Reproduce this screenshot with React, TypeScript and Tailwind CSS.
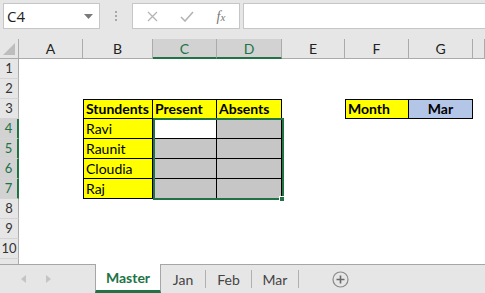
import React from 'react';

const cols = ['A', 'B', 'C', 'D', 'E', 'F', 'G', ''];
const selCols = ['C', 'D'];
const rows = [1, 2, 3, 4, 5, 6, 7, 8, 9, 10];
const selRows = [4, 5, 6, 7];

const students = ['Ravi', 'Raunit', 'Cloudia', 'Raj'];

const font = { fontFamily: 'Lato, "Open Sans", sans-serif' };

const Cell = ({ className = '', children }: { className?: string; children?: React.ReactNode }) => (
    <div className={`h-[20px] flex items-center px-[2px] text-[14px] text-black leading-none ${className}`}>{children}</div>
);

const SheetRow = ({ n }: { n: number }) => {
    const sel = selRows.includes(n);
    const header = (
        <div
            className={`h-[20px] flex items-center justify-center text-[13px] border-b border-[#d4d4d4] ${
                sel ? 'bg-[#d2d2d2] text-[#217346] border-r-2 border-r-[#217346]' : 'bg-[#e6e6e6] text-[#333] border-r border-r-[#ababab]'
            }`}
        >
            {n}
        </div>
    );

    let cells: React.ReactNode[] = [];
    if (n === 3) {
        cells = [
            <Cell key="a" />,
            <Cell key="b" className="bg-[#ffff00] font-bold border border-black">Stundents</Cell>,
            <Cell key="c" className="bg-[#ffff00] font-bold border-y border-r border-black">Present</Cell>,
            <Cell key="d" className="bg-[#ffff00] font-bold border-y border-r border-black">Absents</Cell>,
            <Cell key="e" />,
            <Cell key="f" className="bg-[#ffff00] font-bold border border-black">Month</Cell>,
            <Cell key="g" className="bg-[#b4c6e7] font-bold border-y border-r border-black justify-center">Mar</Cell>,
            <Cell key="h" />,
        ];
    } else if (n >= 4 && n <= 7) {
        const name = students[n - 4];
        cells = [
            <Cell key="a" />,
            <Cell key="b" className="bg-[#ffff00] border-x border-b border-black">{name}</Cell>,
            <Cell key="c" className={`${n === 4 ? 'bg-white' : 'bg-[#c6c6c6]'} border-r border-b border-black`} />,
            <Cell key="d" className="bg-[#c6c6c6] border-r border-b border-black" />,
            <Cell key="e" />,
            <Cell key="f" />,
            <Cell key="g" />,
            <Cell key="h" />,
        ];
    } else {
        cells = cols.map((c, i) => <Cell key={i} />);
    }

    return (
        <>
            {header}
            {cells}
        </>
    );
};

export default function App() {
    return (
        <div className="w-[485px] h-[293px] overflow-hidden bg-white flex flex-col select-none" style={font}>
            {/* formula bar */}
            <div className="h-[39px] bg-[#e6e6e6] flex items-start pt-[3px] pl-[3px] gap-0">
                <div className="w-[97px] h-[26px] bg-white border border-[#c6c6c6] flex items-center justify-between pl-[3px] pr-[6px]">
                    <span className="text-[15px] text-[#222]" style={{ fontFamily: '"Open Sans", sans-serif' }}>C4</span>
                    <svg width="9" height="5" viewBox="0 0 9 5"><path d="M0 0h9L4.5 5z" fill="#7a7a7a" /></svg>
                </div>
                <div className="w-[32px] h-[26px] flex flex-col items-center justify-center gap-[2px]">
                    <span className="w-[2px] h-[2px] bg-[#a8a8a8]" />
                    <span className="w-[2px] h-[2px] bg-[#a8a8a8]" />
                    <span className="w-[2px] h-[2px] bg-[#a8a8a8]" />
                </div>
                <div className="w-[108px] h-[26px] bg-white border border-[#c6c6c6] flex items-center">
                    <div className="w-[38px] flex justify-center">
                        <svg width="11" height="11" viewBox="0 0 11 11"><path d="M1 1l9 9M10 1l-9 9" stroke="#b4b4b4" strokeWidth="1.3" /></svg>
                    </div>
                    <div className="w-[32px] flex justify-center">
                        <svg width="14" height="11" viewBox="0 0 14 11"><path d="M1 6l4 4 8-9" stroke="#b4b4b4" strokeWidth="1.6" fill="none" /></svg>
                    </div>
                    <div className="w-[36px] flex justify-center">
                        <span className="text-[14px] italic text-[#777]" style={{ fontFamily: '"Liberation Serif", serif' }}>f<span className="text-[11px]">x</span></span>
                    </div>
                </div>
                <div className="w-[3px]" />
                <div className="flex-1 h-[26px] bg-white border border-[#c6c6c6] border-r-0" />
            </div>

            {/* sheet */}
            <div className="relative h-[225px] overflow-hidden">
                <div className="grid grid-cols-[19px_64px_70px_64px_65px_63px_64px_64px_1fr]">
                    <div className="h-[20px] bg-[#e6e6e6] border-r border-b border-[#ababab] relative">
                        <svg className="absolute right-[3px] bottom-[3px]" width="12" height="12" viewBox="0 0 12 12"><path d="M12 0v12H0z" fill="#bdbdbd" /></svg>
                    </div>
                    {cols.map((c, i) => {
                        const sel = selCols.includes(c);
                        return (
                            <div
                                key={i}
                                className={`h-[20px] flex items-center justify-center text-[14px] border-r border-[#ababab] ${
                                    sel ? 'bg-[#d2d2d2] text-[#217346] border-b-2 border-b-[#217346]' : 'bg-[#e6e6e6] text-[#222] border-b border-b-[#ababab]'
                                }`}
                            >
                                {c}
                            </div>
                        );
                    })}
                    {rows.map((n) => (
                        <SheetRow key={n} n={n} />
                    ))}
                    <div className="h-[20px] bg-[#e6e6e6] border-r border-[#ababab]" />
                </div>

                {/* selection */}
                <div className="absolute left-[153px] top-[79px] w-[131px] h-[82px] border-2 border-[#217346]" />
                <div className="absolute left-[279px] top-[157px] w-[6px] h-[6px] bg-[#217346] border border-white" />
            </div>

            {/* sheet tabs */}
            <div className="h-[29px] bg-[#e6e6e6] border-t border-[#a6a6a6] flex items-stretch">
                <div className="w-[95px] flex items-center pl-[21px] gap-[20px]">
                    <svg width="5" height="8" viewBox="0 0 5 8"><path d="M5 0v8L0 4z" fill="#c4c4c4" /></svg>
                    <svg width="5" height="8" viewBox="0 0 5 8"><path d="M0 0v8l5-4z" fill="#c4c4c4" /></svg>
                </div>
                <div className="w-[66px] -mt-px bg-white border-x border-[#a6a6a6] border-b-[3px] border-b-[#217346] flex items-center justify-center text-[14px] font-bold text-[#217346]">
                    Master
                </div>
                <div className="w-[45px] flex items-center justify-center text-[14px] text-[#444] border-r border-[#b0b0b0] my-[5px]">Jan</div>
                <div className="w-[46px] flex items-center justify-center text-[14px] text-[#444] border-r border-[#b0b0b0] my-[5px]">Feb</div>
                <div className="w-[47px] flex items-center justify-center text-[14px] text-[#444] border-r border-[#b0b0b0] my-[5px]">Mar</div>
                <div className="w-[82px] flex items-center justify-center">
                    <svg width="17" height="17" viewBox="0 0 17 17">
                        <circle cx="8.5" cy="8.5" r="7.5" fill="none" stroke="#8a8a8a" strokeWidth="1.2" />
                        <path d="M8.5 4.5v8M4.5 8.5h8" stroke="#6a6a6a" strokeWidth="1.6" />
                    </svg>
                </div>
            </div>
        </div>
    );
}
